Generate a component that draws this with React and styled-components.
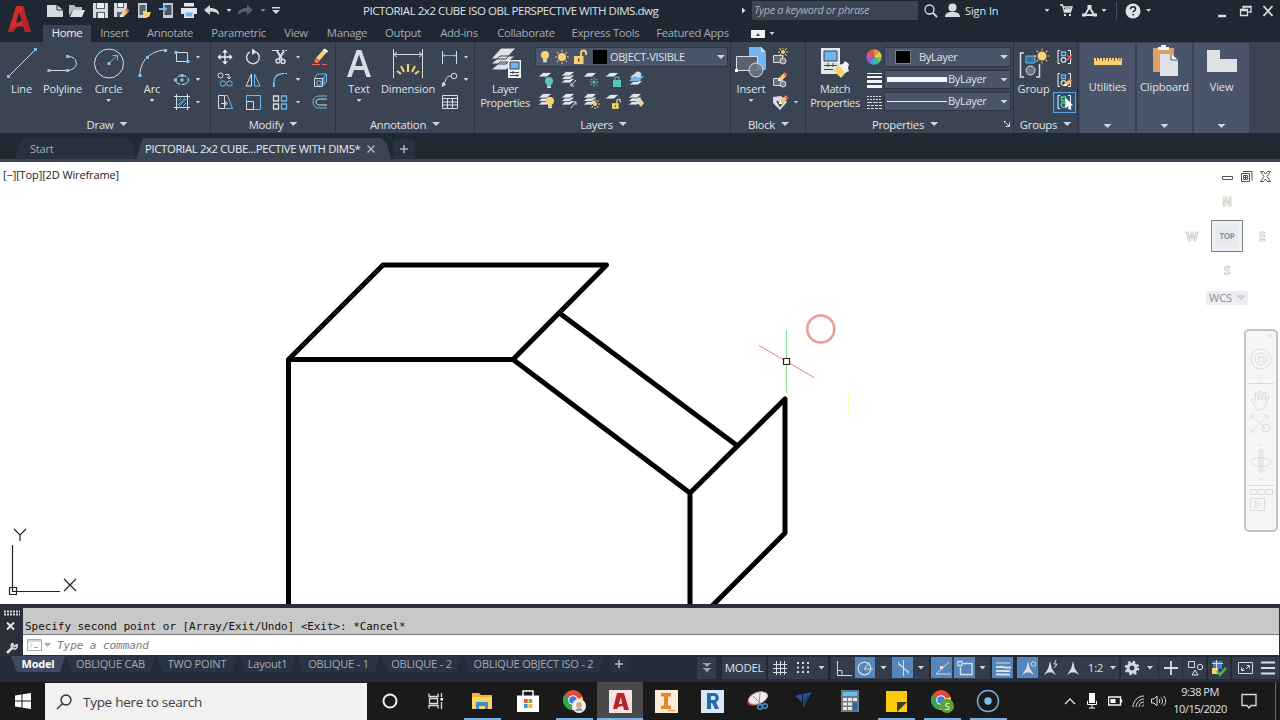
import styled, { createGlobalStyle, css } from 'styled-components';

const light = '#d9dde3';
const blue = '#6fb7ee';
const yellow = '#f8d272';

const GlobalStyle = createGlobalStyle`
  * {
    box-sizing: border-box;
  }

  body {
    margin: 0;
    overflow: hidden;
    background: #1f2832;
    font-family: 'Open Sans', 'Noto Sans', sans-serif;
    font-size: 11px;
    letter-spacing: -0.3px;
    color: #dfe3e8;
  }
`;

const Window = styled.div`
  display: flex;
  flex-direction: column;
  width: 1280px;
  height: 720px;
  overflow: hidden;
  white-space: nowrap;
`;

const Svg = styled.svg`
  display: block;
  flex: none;
`;

const Caret = styled.i`
  flex: none;
  width: ${({ $size = 4 }) => $size * 2}px;
  height: ${({ $size = 4 }) => Math.ceil($size)}px;
  background: ${({ $color = '#cfd5dc' }) => $color};
  clip-path: polygon(0 0, 100% 0, 50% 100%);
`;

/* title bar */

const Header = styled.header`
  display: flex;
  height: 42px;
  background: #1f2832;
`;

const LogoBox = styled.div`
  flex: none;
  width: 43px;
  padding: 5px 0 0 7px;
`;

const HeaderRows = styled.div`
  flex: 1;
`;

const TitleRow = styled.div`
  display: flex;
  align-items: center;
  height: 21px;
`;

const QuickIcons = styled.div`
  display: flex;
  flex: none;
  align-items: center;
  width: 320px;
  padding-left: 3px;
`;

const Cell = styled.div`
  display: flex;
  flex: none;
  align-items: center;
  justify-content: ${({ $end }) => ($end ? 'flex-end' : 'center')};
  width: ${({ $w }) => $w}px;
`;

const FileTitle = styled.div`
  flex: none;
  width: 376px;
  font-size: 11.5px;
  letter-spacing: -0.45px;
`;

const PlayMark = styled.i`
  width: 4px;
  height: 7px;
  background: #d8dce2;
  clip-path: polygon(0 0, 100% 50%, 0 100%);
`;

const SearchInput = styled.div`
  flex: none;
  width: 166px;
  height: 19px;
  margin-left: 4px;
  padding-left: 2px;
  background: #3b4453;
  color: #a9b0ba;
  font-style: italic;
  letter-spacing: -0.4px;
  line-height: 18px;
`;

const SignIn = styled.span`
  flex: none;
  width: 78px;
  margin-left: 3px;
  letter-spacing: -0.1px;
`;

const Divider = styled.i`
  width: 1px;
  height: 17px;
  background: #48515d;
`;

const RibbonTabs = styled.nav`
  display: flex;
  height: 21px;
  padding-top: 4px;
`;

const RibbonTab = styled.div`
  width: ${({ $w }) => $w}px;
  height: 17px;
  color: #a4abb5;
  font-size: 11.3px;
  line-height: 15px;
  text-align: center;

  ${({ $active }) => $active && css`
    background: #3b4453;
    color: #eef1f4;
  `}
`;

const MiniPanel = styled.div`
  display: flex;
  align-items: center;
  justify-content: center;
  width: 14px;
  height: 8px;
  margin: 5px 5px 0 14px;
  background: #f2f3f5;

  i {
    border: 2px solid transparent;
    border-bottom: 3px solid #3b4453;
    border-top: 0;
  }
`;

/* ribbon */

const Ribbon = styled.section`
  display: flex;
  height: 91px;
  padding-left: 2px;
  background: #3b4453;
`;

const Panel = styled.div`
  display: flex;
  flex: none;
  flex-direction: column;
  width: ${({ $w }) => $w}px;
  border-right: 1px solid #29313d;
`;

const PanelBody = styled.div`
  display: flex;
  height: 73px;
`;

const PanelTitle = styled.div`
  display: flex;
  align-items: center;
  justify-content: center;
  gap: 6px;
  height: 18px;
  padding-left: ${({ $shift = 0 }) => $shift}px;
  font-size: 11.3px;
  letter-spacing: -0.25px;
`;

const BigButton = styled.div`
  display: flex;
  flex: none;
  flex-direction: column;
  align-items: center;
  width: ${({ $w }) => $w}px;
  padding-top: 5px;
  line-height: 14px;
  text-align: center;
  letter-spacing: ${({ $spacing = -0.12 }) => $spacing}px;

  span {
    height: 15px;
    margin: 3px -10px 0;
  }

  ${Caret} {
    margin-top: 2px;
  }
`;

const ToolColumn = styled.div`
  display: grid;
  grid-template-rows: 22px 23px 22px;
  grid-template-columns: ${({ $cols = '20px 12px' }) => $cols};
  place-items: center;
  height: 67px;
  margin: 4px 0 0 ${({ $left = 0 }) => $left}px;
`;

const LayerTools = styled.div`
  width: 195px;
  padding-top: 5px;
`;

const Combo = styled.div`
  display: flex;
  align-items: center;
  width: ${({ $w }) => $w}px;
  height: ${({ $h = 20 }) => $h}px;
  padding: 0 2px;
  border: 1px solid #2f3744;
  background: #4a556a;
  line-height: 14px;

  span {
    padding-bottom: 1px;
  }

  ${Caret} {
    margin-left: auto;
  }
`;

const Swatch = styled.i`
  width: ${({ $framed }) => ($framed ? 16 : 14)}px;
  height: 14px;
  margin: ${({ $framed }) => ($framed ? '0 8px 0 8px' : '0 3px 0 0')};
  background: #000;
  border: ${({ $framed }) => ($framed ? '1px solid #77808d' : '0')};
`;

const IconRow = styled.div`
  display: grid;
  grid-template-columns: repeat(5, 22.4px);
  place-items: center;
  height: 22px;
  margin-top: 1px;

  & + & {
    margin-top: 0;
  }
`;

const PropertyRows = styled.div`
  display: flex;
  flex-direction: column;
  gap: 3px;
  padding-top: 5px;
`;

const LineSample = styled.i`
  width: 60px;
  height: ${({ $h }) => $h}px;
  margin-right: 1px;
  background: #f4f5f7;
`;

const Launcher = styled.div`
  margin-left: 60px;
  margin-right: -63px;
`;

const Selected = styled.div`
  display: flex;
  align-items: center;
  justify-content: center;
  width: 23px;
  height: 21px;
  border: 1px solid #58a3df;
  background: #2e506e;
`;

const Tile = styled.div`
  display: flex;
  flex-direction: column;
  align-items: center;
  width: 55px;
  height: 90px;
  margin: 1px 0 0 2px;
  background: #4a556b;
  letter-spacing: -0.1px;

  span {
    height: 32px;
  }

  ${Caret} {
    margin-top: 13px;
  }
`;

const TileIcon = styled.div`
  display: flex;
  align-items: center;
  height: 36px;
`;

/* drawing tabs */

const FileTabs = styled.div`
  display: flex;
  align-items: flex-end;
  height: 29px;
  padding: 5px 0 0 15px;
  border-bottom: 3px solid #3b4453;
  background: #1f2a33;
`;

const FileTab = styled.div`
  display: flex;
  align-items: center;
  width: ${({ $w }) => $w}px;
  height: 21px;
  padding-left: ${({ $pad }) => $pad}px;
  background: ${({ $active }) => ($active ? '#3b4453' : '#28323f')};
  color: ${({ $active }) => ($active ? '#e8ebef' : '#a0a8b2')};
  clip-path: polygon(7px 0, calc(100% - 10px) 0, calc(100% - 4px) 6px, 100% 100%, 0 100%);
  font-size: 11.3px;
  letter-spacing: -0.33px;

  svg {
    margin-left: 7px;
  }
`;

const PlusTab = styled.div`
  display: flex;
  align-items: center;
  justify-content: center;
  width: ${({ $w }) => $w}px;
  height: ${({ $h }) => $h}px;
  margin-left: ${({ $left }) => $left}px;
  border-radius: 4px;
  background: #28323f;
`;

/* canvas */

const Canvas = styled.main`
  position: relative;
  height: 442px;
  background: #fff;
`;

const Drawing = styled.svg`
  display: block;
`;

const ViewLabel = styled.div`
  position: absolute;
  top: 6px;
  left: 3px;
  color: #222;
  font-size: 11px;
  line-height: 14px;
  letter-spacing: -0.12px;
`;

const ViewControls = styled.div`
  position: absolute;
  top: 8px;
  right: 9px;
`;

const Compass = styled.div`
  position: absolute;
  top: 32px;
  left: 1184px;
  display: grid;
  grid-template-columns: 16px 54px 16px;
  grid-template-rows: 15px 54px 15px;
  place-items: center;
  color: #fff;
  font-size: 12px;
  font-weight: 700;
  -webkit-text-stroke: 0.6px #b4b4b4;
`;

const CubeFace = styled.div`
  width: 32px;
  height: 32px;
  border: 1px solid #858585;
  background: #e6eaee;
  box-shadow: inset 0 0 0 4px #edeff1;
  color: #8c9299;
  font-size: 8px;
  letter-spacing: -0.3px;
  line-height: 30px;
  text-align: center;
  -webkit-text-stroke: 0;
`;

const Wcs = styled.div`
  position: absolute;
  top: 129px;
  left: 1206px;
  display: flex;
  align-items: center;
  gap: 5px;
  width: 42px;
  height: 14px;
  padding: 0 0 1px 3px;
  background: #eeeef2;
  color: #8d8d92;
  letter-spacing: 0;
`;

const NavBar = styled.div`
  position: absolute;
  top: 167px;
  left: 1244px;
  width: 34px;
  height: 203px;
  border: 2px solid #c4c4c4;
  border-radius: 5px;
  background: #f6f6f6;
`;

/* command line */

const CommandBar = styled.section`
  display: flex;
  height: 52px;
  padding: 4px 1px 1px 0;
  background: #2b2f3c;
`;

const Gutter = styled.div`
  width: 23px;
`;

const CommandBox = styled.div`
  flex: 1;
  font-family: 'DejaVu Sans Mono', monospace;
  font-size: 11px;
  letter-spacing: -0.06px;
`;

const CommandLog = styled.div`
  height: 27px;
  padding: 12px 0 0 2px;
  border-bottom: 1px solid #777;
  background: #c8c8c8;
  color: #111;
  line-height: 14px;
`;

const CommandInput = styled.div`
  display: flex;
  align-items: center;
  height: 20px;
  padding-left: 4px;
  background: #fff;
  color: #7b7b7b;
  font-style: italic;
`;

const Prompt = styled.div`
  display: flex;
  align-items: center;
  gap: 2px;
  width: 30px;
`;

/* status bar */

const StatusBar = styled.footer`
  display: flex;
  height: 26px;
  padding-left: 11px;
  background: #222b37;
`;

const LayoutTab = styled.div`
  width: ${({ $w }) => $w}px;
  height: 16px;
  margin-right: 1px;
  background: ${({ $active }) => ($active ? '#3f4a60' : '#2a3341')};
  clip-path: polygon(0 0, 100% 0, calc(100% - 5px) 100%, 6px 100%);
  color: ${({ $active }) => ($active ? '#fff' : '#a4abb5')};
  font-size: 11px;
  font-weight: ${({ $active }) => ($active ? 700 : 400)};
  letter-spacing: -0.18px;
  line-height: 15px;
  text-align: center;
`;

const StatusTools = styled.div`
  display: flex;
  align-items: center;
  height: 23px;
  margin-left: auto;
`;

const StatusGroup = styled.div`
  display: flex;
  align-items: center;
  height: 22px;
  margin-right: ${({ $gap = 2 }) => $gap}px;
  background: #333c4b;
`;

const StatusButton = styled.div`
  display: flex;
  align-items: center;
  justify-content: center;
  width: ${({ $w }) => $w}px;
  height: 21px;
  background: ${({ $on }) => ($on ? '#5486bb' : 'transparent')};
  font-size: 11.5px;
`;

const StatusGap = styled.i`
  width: 2px;
`;

/* taskbar */

const Taskbar = styled.div`
  display: flex;
  height: 38px;
  background: #1a1a1b;
`;

const TaskSearch = styled.div`
  display: flex;
  align-items: center;
  gap: 11px;
  width: 322px;
  margin-top: 1px;
  padding-left: 11px;
  background: #f1f1f1;
  color: #3d3d3d;
  font-size: 13.5px;
  letter-spacing: -0.28px;
`;

const TaskItem = styled.div`
  display: flex;
  align-items: center;
  justify-content: center;
  width: ${({ $w = 46 }) => $w}px;
  height: 38px;
  background-color: ${({ $focused }) => ($focused ? '#4a4a4c' : 'transparent')};
  background-image: ${({ $open }) => ($open ? 'linear-gradient(#76b2e6, #76b2e6)' : 'none')};
  background-repeat: no-repeat;
  background-position: center bottom;
  background-size: ${({ $focused }) => ($focused ? '100%' : '37px')} 2px;
`;

const Tray = styled.div`
  display: flex;
  align-items: center;
  margin-left: auto;
  padding-right: 4px;
`;

const Clock = styled.div`
  width: 62px;
  padding-bottom: 2px;
  font-size: 11px;
  letter-spacing: -0.5px;
  line-height: 17px;
  text-align: center;
`;

const ShowDesktop = styled.i`
  width: 1px;
  height: 38px;
  margin-left: 9px;
  background: #6a6a6a;
`;

function Icon({ w = 18, h = 18, stroke = light, children, ...rest }) {
  return (
    <Svg width={w} height={h} viewBox={`0 0 ${w} ${h}`} fill="none" stroke={stroke} {...rest}>
      {children}
    </Svg>
  );
}

function Grip({ points }) {
  return points.map(([x, y]) => (
    <rect key={`${x}-${y}`} x={x - 1.5} y={y - 1.5} width="3" height="3" fill="#7cc0f5" stroke="none" />
  ));
}

function Bulb({ x = 0, y = 0, color = yellow }) {
  return (
    <g transform={`translate(${x} ${y})`} stroke="none">
      <circle cx="4" cy="4" r="4" fill={color} />
      <path d="M2 7h4v2H2z" fill={color} />
      <path d="M2.2 9.2h3.6v2H2.2z" fill="#e9ecef" />
    </g>
  );
}

function Sun({ x, y, r = 3, color = yellow }) {
  return (
    <g stroke={color}>
      <circle cx={x} cy={y} r={r} fill={color} stroke="none" />
      {[0, 45, 90, 135].map((a) => (
        <path key={a} d={`M${x - r - 3} ${y}h2M${x + r + 1} ${y}h2`} transform={`rotate(${a} ${x} ${y})`} />
      ))}
    </g>
  );
}

function Lock({ x, y, color = yellow, s = 1 }) {
  return (
    <g transform={`translate(${x} ${y}) scale(${s})`}>
      <path d="M7 6V3a2.5 2.5 0 0 1 5 0v2" stroke={color} strokeWidth="1.8" />
      <path d="M0 6h9.5v8H0z" fill={color} stroke="none" />
      <path d="M4.7 8.5v3" stroke="#4a3d20" strokeWidth="1.4" />
    </g>
  );
}

function Sheets({ count = 3, y = 0, x = 0 }) {
  return [...Array(count).keys()].reverse().map((i) => (
    <path
      key={i}
      d={`M${x} ${y + 5 + i * 3.5}l5-4.5h9l-5 4.5z`}
      fill="#e2e5e9"
      stroke="#3b4453"
      strokeWidth=".8"
    />
  ));
}

function Pencil({ x, y, s = 1 }) {
  return (
    <g transform={`translate(${x} ${y}) scale(${s})`} stroke="none">
      <path d="M0 9l1-3.500 5-5L9 3.500l-5 5z" fill="#f4c66c" />
      <path d="M6 .5L7.500-1 10.500 2 9 3.500z" fill="#ee6c56" />
      <path d="M0 9l1-3.500L4 8.500z" fill="#fff" />
    </g>
  );
}

function QuickAccess() {
  return (
    <QuickIcons>
      <Cell $w={18}>
        <Icon w={16} h={14} stroke="none">
          <path d="M0 1h10l6 5v7H0z" fill="#d5dae0" />
          <path d="M10 1v5h6" stroke="#1f2832" />
        </Icon>
      </Cell>
      <Cell $w={26}>
        <Icon w={16} h={14} stroke="none">
          <path d="M0 1h5l2 2h6v3H4L0 12z" fill="#b4bbc4" />
          <path d="M4 6h12l-3 7H1z" fill="#dfe3e8" />
        </Icon>
      </Cell>
      <Cell $w={20}>
        <Icon w={15} h={15} stroke="none">
          <path d="M0 0h15v15H0z" fill="#d5dae0" />
          <path d="M3 0h9v6H3zM3 9h9v6H3z" fill="#59626e" />
          <path d="M4 0h7v5H4zM5 10h6v5H5z" fill="#eef0f2" />
        </Icon>
      </Cell>
      <Cell $w={24}>
        <Icon w={16} h={15} stroke="none">
          <path d="M0 0h13v6l-7 8H0z" fill="#d5dae0" />
          <path d="M3 0h7v5H3zM3 9h5v5H3z" fill="#59626e" />
          <path d="M4 0h5v4H4z" fill="#eef0f2" />
          <Pencil x={6} y={6} s={0.9} />
        </Icon>
      </Cell>
      <Cell $w={20}>
        <Icon w={15} h={15} stroke="none">
          <path d="M1 0h9v15H1z" fill="#c6ccd4" />
          <path d="M2.500 2h6v10h-6z" fill="#5a6470" />
          <path d="M6 8h3l1 1h4l-2 5H6z" fill={yellow} />
        </Icon>
      </Cell>
      <Cell $w={24}>
        <Icon w={15} h={15} stroke="none">
          <path d="M4 0h10v15H4z" fill="#c6ccd4" />
          <path d="M5.500 2h7v10h-7z" fill="#4a5460" />
          <path d="M0 5h4V2.500L8.500 6 4 9.500V7H0z" fill={blue} />
        </Icon>
      </Cell>
      <Cell $w={21}>
        <Icon w={16} h={15} stroke="none">
          <path d="M3 0h10v3.500H3zM0 5h16v6H0z" fill="#e3e6ea" />
          <path d="M3 9h10v6H3z" fill="#e3e6ea" />
          <path d="M4.500 9.500h7v4h-7z" fill={blue} />
        </Icon>
      </Cell>
      <Cell $w={26}>
        <Icon w={16} h={11} stroke="none">
          <path d="M0 5l6-5v3c6 0 9 2 9 7-2-3-5-3.500-9-3.500V10z" fill="#d5dae0" />
        </Icon>
      </Cell>
      <Cell $w={8}><Caret $size={2.5} /></Cell>
      <Cell $w={26}>
        <Icon w={16} h={11} stroke="none">
          <path d="M15 5L9 0v3C3 3 0 5 0 10c2-3 5-3.500 9-3.500V10z" fill="#58616c" />
        </Icon>
      </Cell>
      <Cell $w={8}><Caret $size={2.5} $color="#7a828d" /></Cell>
      <Cell $w={18}>
        <Icon w={8} h={9} stroke="none">
          <path d="M0 1h8v1.400H0zM0 4h8L4 8z" fill="#d5dae0" />
        </Icon>
      </Cell>
    </QuickIcons>
  );
}

const ribbonTabs = [
  ['Home', 48], ['Insert', 47], ['Annotate', 64], ['Parametric', 73], ['View', 42], ['Manage', 60],
  ['Output', 52], ['Add-ins', 60], ['Collaborate', 74], ['Express Tools', 85], ['Featured Apps', 89],
];

function TitleBar() {
  return (
    <Header>
      <LogoBox>
        <Icon w={25} h={28} stroke="none">
          <path d="M9 1h7l8 26h-6l-2-6-7 1-3 5H1zM12 7l-3 11 6-2z" fill="#d42a2b" fillRule="evenodd" />
          <path d="M1 27l8-7 1 2-4 5zM14 14l4 13h6L16 1z" fill="#b8232a" />
        </Icon>
      </LogoBox>
      <HeaderRows>
        <TitleRow>
          <QuickAccess />
          <FileTitle>PICTORIAL 2x2 CUBE ISO OBL PERSPECTIVE WITH DIMS.dwg</FileTitle>
          <Cell $w={9}><PlayMark /></Cell>
          <SearchInput>Type a keyword or phrase</SearchInput>
          <Cell $w={25}>
            <Icon w={14} h={14} strokeWidth="1.300">
              <circle cx="5.500" cy="5.500" r="4.500" />
              <path d="M8.700 8.700L13 13" strokeWidth="1.800" />
            </Icon>
          </Cell>
          <Cell $w={19}>
            <Icon w={15} h={15} stroke="none">
              <circle cx="7.500" cy="4.500" r="4" fill="#d8dce2" />
              <path d="M0 14c0-4 3-5 7.500-5s7.500 1 7.500 5z" fill="#d8dce2" />
            </Icon>
          </Cell>
          <SignIn>Sign In</SignIn>
          <Cell $w={8}><Caret $size={2.5} /></Cell>
          <Cell $w={31}>
            <Icon w={13} h={13}>
              <path d="M0 1h2.500l2 7h6.500M3 3h9l-1 3.500H4M5 5h6" strokeWidth="1.400" />
              <path d="M4 10h2v2H4zM9 10h2v2H9z" fill={light} stroke="none" />
            </Icon>
          </Cell>
          <Cell $w={14}>
            <Icon w={15} h={14} strokeWidth="2">
              <path d="M7.500 3L3 11h9z" />
              <path d="M5.500 1h4v3h-4zM0 9.500h4v3H0zM11 9.500h4v3h-4z" fill={light} stroke="none" />
            </Icon>
          </Cell>
          <Cell $w={16}><Caret $size={2.5} /></Cell>
          <Cell $w={9}><Divider /></Cell>
          <Cell $w={23}>
            <Icon w={16} h={16} stroke="none">
              <circle cx="8" cy="8" r="7.500" fill="#dfe3e8" />
              <path d="M5.500 6.200c0-3.200 5-3.200 5 0 0 1.800-2.400 1.600-2.400 3.300" stroke="#1f2832" strokeWidth="1.500" />
              <path d="M7.300 11h1.600v1.600H7.300z" fill="#1f2832" />
            </Icon>
          </Cell>
          <Cell $w={9}><Caret $size={2.5} /></Cell>
          <Cell $w={122} $end>
            <Icon w={58} h={14} strokeWidth="1.300">
              <path d="M1 12h8" strokeWidth="2.500" />
              <path d="M23.500 5.500h7v6h-7zM26 5V2.500h8V8h-2.500M23.500 6.500h7M26 3h8" />
              <path d="M46.500 2l9 10M55.500 2l-9 10" strokeWidth="1.800" />
            </Icon>
          </Cell>
        </TitleRow>
        <RibbonTabs>
          {ribbonTabs.map(([name, width], i) => (
            <RibbonTab key={name} $w={width} $active={i === 0}>{name}</RibbonTab>
          ))}
          <MiniPanel><i /></MiniPanel>
          <Cell $w={4}><Caret $size={2.5} /></Cell>
        </RibbonTabs>
      </HeaderRows>
    </Header>
  );
}

function DrawPanel() {
  return (
    <Panel $w={209}>
      <PanelBody>
        <BigButton $w={39}>
          <Icon w={32} h={32}>
            <path d="M3 29L29 3" />
            <Grip points={[[2.5, 29.5], [29.5, 2.5]]} />
          </Icon>
          <span>Line</span>
        </BigButton>
        <BigButton $w={43}>
          <Icon w={34} h={32}>
            <path d="M3 23.500h19c11-1 11-14 0-14" />
            <Grip points={[[3, 23.5], [21.5, 23.5], [21.5, 9.5]]} />
          </Icon>
          <span>Polyline</span>
        </BigButton>
        <BigButton $w={49}>
          <Icon w={32} h={32}>
            <circle cx="16" cy="16.500" r="14.500" />
            <path d="M16 16.500l8-8M19.500 8.500h5v5" stroke={blue} />
            <Grip points={[[16, 16.5]]} />
          </Icon>
          <span>Circle</span>
          <Caret $size={2.5} />
        </BigButton>
        <BigButton $w={38}>
          <Icon w={32} h={32}>
            <path d="M4 28C4 14 14 4 29 3" />
            <Grip points={[[4, 28.5], [11.5, 10.5], [29.5, 3.5]]} />
          </Icon>
          <span>Arc</span>
          <Caret $size={2.5} />
        </BigButton>
        <ToolColumn $left={1}>
          <Icon>
            <path d="M3.500 4.500h11v9h-11z" />
            <Grip points={[[3, 4.5], [15, 13.5]]} />
          </Icon>
          <Caret $size={2.5} />
          <Icon>
            <ellipse cx="9" cy="9" rx="6.500" ry="4.500" strokeDasharray="9 1.500" />
            <Grip points={[[9, 4.5], [9, 9], [2.5, 9]]} />
          </Icon>
          <Caret $size={2.5} />
          <Icon>
            <path d="M3.500 1v16M14.500 1v16M1 3.500h16M1 14.500h16" />
            <path d="M5 8l3-3M5 12l7-7M6 13l7-7M10 13l3-3" stroke={blue} />
          </Icon>
          <Caret $size={2.5} />
        </ToolColumn>
      </PanelBody>
      <PanelTitle $shift={2}>Draw<Caret /></PanelTitle>
    </Panel>
  );
}

function ModifyPanel() {
  return (
    <Panel $w={125}>
      <PanelBody>
        <ToolColumn $cols="28px 28px 26px 10px 33px">
          <Icon>
            <path d="M9 3v12M3 9h12" strokeWidth="1.300" stroke="#f4f5f7" />
            <path d="M9 1.500l3 3H6zM9 16.500l3-3H6zM1.500 9l3-3v6zM16.500 9l-3-3v6z" fill="#f4f5f7" stroke="none" />
          </Icon>
          <Icon>
            <path d="M12.500 4.200a6.300 6.300 0 1 1-6.500-.4" strokeWidth="1.400" />
            <path d="M8 .5L13 4 8 7z" fill={light} stroke="none" />
          </Icon>
          <Icon>
            <path d="M1 2.500h7" />
            <path d="M11 2.500h6" strokeDasharray="2 1" />
            <path d="M6 3l5 8M13 3l-5 8" strokeWidth="2" />
            <circle cx="7" cy="13" r="2" strokeWidth="1.500" />
            <circle cx="12" cy="13.500" r="2" strokeWidth="1.500" />
          </Icon>
          <Caret $size={2.5} />
          <Icon stroke="none">
            <path d="M5 10l8-9 3.500 2.500-8 9z" fill={yellow} />
            <path d="M12 2l1.500-1.500L17 3l-1 1.500z" fill="#fff" />
            <path d="M3 12.500L5.500 10 9 12.500l-2 2.500H4z" fill="#ec6a5a" />
            <path d="M1 16.500h8M11 16.500h5" stroke="#ec6a5a" />
          </Icon>
          <Icon>
            <circle cx="4.500" cy="4.500" r="2.500" />
            <path d="M9 3.500h4v4M11 6l2 2 2-2" />
            <circle cx="7" cy="12.500" r="2.700" stroke={blue} />
            <circle cx="13.500" cy="12.500" r="2.700" stroke={blue} />
          </Icon>
          <Icon>
            <path d="M7.500 3v12H2z" />
            <path d="M10.500 3v12H16z" stroke={blue} />
          </Icon>
          <Icon>
            <path d="M3 16v-5c0-5 3-8 8-8" stroke={blue} strokeWidth="1.500" />
            <path d="M11 2.500h5M2.500 16v-4" strokeDasharray="2 1" />
          </Icon>
          <Caret $size={2.5} />
          <Icon stroke={blue}>
            <path d="M3.500 7.500h8v8h-8z" stroke={light} />
            <path d="M3.500 7l3-4h9l-4 4.500M15.500 3v8l-4 4.500M6 10h4v4H6zM13 6v7" />
          </Icon>
          <Icon>
            <path d="M2.500 2.500h6v13h-6zM5 10.500h5M8.500 8l3 2.500-3 2.500" />
            <path d="M9 2.500h2.500l5 13H9" stroke={blue} />
          </Icon>
          <Icon>
            <path d="M2.500 2.500h14v14h-14z" stroke={blue} />
            <path d="M2.500 8.500h7v8h-7z" />
          </Icon>
          <Icon>
            <path d="M2.500 3h5v5h-5zM2.500 11h5v5h-5z" strokeWidth="1.300" />
            <path d="M10.500 3h5v5h-5zM10.500 11h5v5h-5z" strokeWidth="1.300" stroke={blue} />
          </Icon>
          <Caret $size={2.5} />
          <Icon>
            <path d="M16 3H8C0 3 0 15 8 15h8" stroke={blue} />
            <path d="M16 6H8c-4 0-4 6 0 6h8" />
          </Icon>
        </ToolColumn>
      </PanelBody>
      <PanelTitle>Modify<Caret /></PanelTitle>
    </Panel>
  );
}

function AnnotationPanel() {
  return (
    <Panel $w={139}>
      <PanelBody>
        <BigButton $w={46}>
          <Icon w={24} h={32} stroke="none">
            <path
              d="M9.600 3h4.800L24 30h-4.600l-2.300-7H6.900l-2.300 7H0zM12 7.600L8.200 19h7.600z"
              fill="#d9dde3"
              fillRule="evenodd"
            />
          </Icon>
          <span>Text</span>
          <Caret $size={2.5} />
        </BigButton>
        <BigButton $w={52}>
          <Icon w={32} h={32}>
            <path d="M1.500 2v29M30.500 2v29M2 7.500h28M5 5L2 7.500 5 10M27 5l3 2.500-3 2.500" />
            <path
              d="M16 25v-8M12 25l-3-6M20 25l3-6M9 27l-4-3M23 27l4-3"
              stroke={yellow}
              strokeWidth="2"
            />
          </Icon>
          <span>Dimension</span>
        </BigButton>
        <ToolColumn $left={6}>
          <Icon>
            <path d="M1.500 3v13M15.500 3v13" />
            <path d="M2 7.500h13M4 6L2.500 7.500 4 9M13 6l1.500 1.500L13 9" stroke={blue} />
          </Icon>
          <Caret $size={2.5} />
          <Icon>
            <circle cx="13" cy="5" r="2.800" />
            <path d="M10 5C4 5 6 9 2 14" />
            <path d="M1 15.500l1-4 2.500 2z" fill={light} />
          </Icon>
          <Caret $size={2.5} />
          <Icon>
            <path d="M1.500 2.500h15v13h-15zM1.500 5.500h15M1.500 9h15M1.500 12h15M6.500 5.500v10M11.500 5.500v10" />
          </Icon>
        </ToolColumn>
      </PanelBody>
      <PanelTitle>Annotation<Caret /></PanelTitle>
    </Panel>
  );
}

function LayersPanel() {
  const teal = '#54c8bd';
  return (
    <Panel $w={256}>
      <PanelBody>
        <BigButton $w={60} $spacing={-0.37}>
          <Icon w={32} h={32} stroke="none">
            <path d="M2 23l9-8h15l-9 8zM2 17l9-8h15l-9 8zM2 12L12 1h15l-10 11z" fill="#dfe2e6" stroke="#3b4453" />
            <path d="M19 13h13v18H19z" fill="#f2f3f5" />
            <path d="M21 15h9v7h-9z" fill={blue} stroke="#3b4453" />
            <path d="M21 25.500h9M21 28.500h9M24 24v3M28 27v3" stroke="#3b4453" />
          </Icon>
          <span>
            Layer
            <br />
            Properties
          </span>
        </BigButton>
        <LayerTools>
          <Combo $w={193}>
            <Icon w={55} h={16}>
              <Bulb x={3} y={2} />
              <Sun x={24} y={8} r={4} />
              <Lock x={36} y={1} />
            </Icon>
            <Swatch />
            <span>OBJECT-VISIBLE</span>
            <Caret />
          </Combo>
          <IconRow>
            <Icon><Sheets count={1} y={2} x={1} /><Bulb x={8} y={7} color={teal} /></Icon>
            <Icon><Sheets x={1} y={1} /><path d="M16 10l-5 6M11 13v3h3" /></Icon>
            <Icon><Sheets count={1} y={2} x={1} /><Sun x={12} y={12} r={1.5} color={teal} /></Icon>
            <Icon>
              <Sheets count={1} y={2} x={1} />
              <path d="M9 10h8v7H9z" fill={teal} stroke="none" />
              <path d="M11 10V7h4v3" stroke={teal} />
            </Icon>
            <Icon>
              <Sheets x={2} y={3} />
              <path d="M2 11l5-5h10l-5 5z" fill={blue} stroke="none" />
              <circle cx="11" cy="4.500" r="3" fill={light} stroke="none" />
            </Icon>
          </IconRow>
          <IconRow>
            <Icon><Sheets x={1} y={1} /><Bulb x={9} y={5} /></Icon>
            <Icon><Sheets x={1} y={1} /><path d="M11 16l5-6M13 10h3v3" /></Icon>
            <Icon><Sheets x={1} y={1} /><Sun x={13} y={12} r={2} /></Icon>
            <Icon><Sheets count={1} y={2} x={1} /><Lock x={8} y={7} s={0.7} /></Icon>
            <Icon>
              <Sheets x={1} y={1} />
              <path d="M9 9l4-3 4 5-3 4z" fill={light} stroke="none" />
              <path d="M12 8l3 5" stroke={yellow} strokeWidth="2" />
            </Icon>
          </IconRow>
        </LayerTools>
      </PanelBody>
      <PanelTitle $shift={2}>Layers<Caret /></PanelTitle>
    </Panel>
  );
}

function BlockPanel() {
  const block = <path d="M2.500 7.500h9v7h-9z" fill="#626b78" />;
  return (
    <Panel $w={75}>
      <PanelBody>
        <BigButton $w={40}>
          <Icon w={32} h={32}>
            <path d="M14 0h12l5 6v17H14z" fill={blue} stroke="none" />
            <path d="M26 0v5h5z" fill="#c6e2f7" stroke="none" />
            <path d="M1.500 9.500h21v14h-21z" fill="#59636f" />
            <circle cx="21" cy="23" r="7" fill="#6c7683" fillOpacity=".85" />
            <path d="M0 22h3v3H0z" fill="#fff" stroke="none" />
          </Icon>
          <span>Insert</span>
          <Caret $size={2.5} />
        </BigButton>
        <ToolColumn $left={-1}>
          <Icon>
            {block}
            <circle cx="12" cy="13" r="3" fill="#7b8490" />
            <Sun x={12} y={4} r={2} />
          </Icon>
          <i />
          <Icon>
            {block}
            <circle cx="12" cy="13" r="3" fill="#7b8490" />
            <Pencil x={7} y={2} s={0.9} />
          </Icon>
          <i />
          <Icon>
            <path d="M2 4l8-1 6 6-7 8-7-7z" fill={light} stroke="none" />
            <path d="M6 8l3 5 5-6" stroke="#3b4453" strokeWidth="1.500" />
            <Pencil x={8} y={3} s={0.9} />
          </Icon>
          <Caret $size={2.5} />
        </ToolColumn>
      </PanelBody>
      <PanelTitle $shift={1}>Block<Caret /></PanelTitle>
    </Panel>
  );
}

function ColorWheel() {
  const colors = ['#f08a3c', '#f2c94c', '#7ac74f', '#3cb6a4', '#4b93e0', '#8e62cf', '#d3549b', '#e8514a'];
  return (
    <Icon stroke="none">
      {colors.map((color, i) => (
        <path key={color} d="M9 9V1.300a7.700 7.700 0 0 1 5.450 2.250z" fill={color} transform={`rotate(${i * 45} 9 9)`} />
      ))}
    </Icon>
  );
}

function PropertiesPanel() {
  return (
    <Panel $w={208}>
      <PanelBody>
        <BigButton $w={58} $spacing={-0.37}>
          <Icon w={32} h={32} stroke="none">
            <path d="M2 1h19v26H2z" fill="#e4e7ea" />
            <path d="M5 4h13v10H5z" fill={blue} stroke="#3b4453" />
            <path d="M5 18.500h13M5 22.500h9M9 16v4M14 16v4" stroke="#3b4453" />
            <path d="M14 23l7-6 7 7-6 7z" fill={yellow} />
            <path d="M20 18l4-1 2-3 4 3-1 4 1 3-4 2z" fill="#f2f3f5" />
          </Icon>
          <span>
            Match
            <br />
            Properties
          </span>
        </BigButton>
        <ToolColumn $cols="20px">
          <ColorWheel />
          <Icon stroke="#f2f3f5">
            <path d="M2 2.500h15" />
            <path d="M2 6h15" strokeWidth="2" />
            <path d="M2 10.500h15" strokeWidth="3" />
            <path d="M2 15.500h15" strokeWidth="3" />
          </Icon>
          <Icon>
            <path d="M2 3.500h15M2 6.500h15" strokeDasharray="2 1" />
            <path d="M2 9.500h15" strokeDasharray="5 1" />
            <path d="M2 12.500h15M2 15.500h15" strokeDasharray="3 1" />
          </Icon>
        </ToolColumn>
        <PropertyRows>
          <Combo $w={127}>
            <Swatch $framed />
            <span>ByLayer</span>
            <Caret />
          </Combo>
          <Combo $w={127} $h={19}>
            <LineSample $h={5} />
            <span>ByLayer</span>
            <Caret />
          </Combo>
          <Combo $w={127} $h={19}>
            <LineSample $h={1} />
            <span>ByLayer</span>
            <Caret />
          </Combo>
        </PropertyRows>
      </PanelBody>
      <PanelTitle>
        Properties
        <Caret />
        <Launcher>
          <Icon w={6} h={6}><path d="M0 .5h2M.5 0v2M2 2l3 3M5.500 1.500v4h-4" /></Icon>
        </Launcher>
      </PanelTitle>
    </Panel>
  );
}

function GroupMark({ color = blue }) {
  return (
    <>
      <path d="M4 2.500H2v13h2M12 2.500h2.500v13H12" stroke="#f2f3f5" />
      <path d="M5.500 4h4v3.500h-4z" stroke={color} strokeWidth="1.300" />
      <circle cx="7.500" cy="12" r="2.300" stroke={color === blue ? light : color} strokeWidth="1.300" />
    </>
  );
}

function GroupsPanel() {
  return (
    <Panel $w={64}>
      <PanelBody>
        <BigButton $w={39}>
          <Icon w={32} h={32}>
            <path d="M6 6H2.500v24H6M18 30h3.500V17" strokeWidth="1.500" />
            <path d="M8 9h9v7H8z" fill="#3a6f9b" stroke={blue} />
            <circle cx="12.500" cy="23.500" r="4.500" fill="#6b747f" />
            <Sun x={24} y={9} r={4.5} />
          </Icon>
          <span>Group</span>
        </BigButton>
        <ToolColumn $cols="23px">
          <Icon>
            <GroupMark />
            <path d="M11 7l5 5M16 7l-5 5" stroke="#e8564f" strokeWidth="1.600" />
          </Icon>
          <Icon>
            <GroupMark />
            <Pencil x={8} y={8} s={0.8} />
          </Icon>
          <Selected>
            <Icon>
              <GroupMark color="#5fd08a" />
              <path d="M9.500 4.500v11l2.600-2.300 1.800 3.800 1.600-.8-1.700-3.600h3.400z" fill="#fff" stroke="none" />
            </Icon>
          </Selected>
        </ToolColumn>
      </PanelBody>
      <PanelTitle>Groups<Caret /></PanelTitle>
    </Panel>
  );
}

function CollapsedPanels() {
  return (
    <>
      <Tile>
        <TileIcon>
          <Icon w={28} h={8} stroke="none">
            <path d="M0 1h28v7H0z" fill={yellow} />
            <path
              d="M2.500 1v3M5.500 1v2M8.500 1v3M11.500 1v2M14.500 1v3M17.500 1v2M20.500 1v3M23.500 1v2M26 1v3"
              stroke="#6c5a2a"
            />
          </Icon>
        </TileIcon>
        <span>Utilities</span>
        <Caret />
      </Tile>
      <Tile>
        <TileIcon>
          <Icon w={26} h={32} stroke="none">
            <path d="M1 3h21v24H1z" fill="#dca265" />
            <path d="M6 5V2h3V0h5v2h3v3z" fill="#f2f3f5" />
            <path d="M8 9h11l7 6v16H8z" fill="#dfe1e4" />
            <path d="M19 9v6h7" stroke="#4a556b" fill="#fff" />
          </Icon>
        </TileIcon>
        <span>Clipboard</span>
        <Caret />
      </Tile>
      <Tile>
        <TileIcon>
          <Icon w={30} h={22} stroke="none">
            <path d="M0 0h13v9h17v13H0z" fill="#dfe1e4" />
          </Icon>
        </TileIcon>
        <span>View</span>
        <Caret />
      </Tile>
    </>
  );
}

function CanvasArea() {
  return (
    <Canvas>
      <Drawing width="1280" height="442" viewBox="0 162 1280 442" fill="none">
        <path
          d="M288.500 606V359.500L383 265H606.500L513 359.500H288.500M513 359.500L690 493L785 399V533L710 608M690 493V608M560 313.500L737 445.500"
          stroke="#000"
          strokeWidth="5"
          strokeLinecap="round"
          strokeLinejoin="round"
        />
        <path d="M12.500 545v42M17 591.500h43M9.500 587.500h7v7h-7zM12.500 587v4.500h4.500" stroke="#222" strokeWidth="1.200" />
        <path d="M14 529l6 6 6-6M20 535v6M64 579l12 12M76 579l-12 12" stroke="#222" strokeWidth="1.200" />
        <path d="M786.500 330v28M786.500 365v28" stroke="#8fdc8f" />
        <path d="M759 345.500l24 14M790 363.500l24 14" stroke="#dd8290" />
        <path d="M783.500 358.500h6v6h-6z" stroke="#222" strokeWidth="1.200" />
        <circle cx="820.800" cy="329" r="13.500" stroke="#ef9a9a" strokeWidth="2.500" />
        <path d="M848.500 392v21" stroke="#fafac0" />
      </Drawing>
      <ViewLabel>[−][Top][2D Wireframe]</ViewLabel>
      <ViewControls>
        <Icon w={50} h={13} stroke="#555">
          <path d="M1.500 6.500h10v3h-10z" />
          <path d="M22 1.500h9v9M20.500 3.500h8v8h-8zM22.500 5.500h4v4h-4zM24.500 5v5M22 7.500h5" />
          <path d="M39.500 1.500h3l2 2.500 2-2.500h3l-3.500 5 3.500 5h-3l-2-2.500-2 2.500h-3l3.500-5z" />
        </Icon>
      </ViewControls>
      <Compass>
        <i />
        N
        <i />
        W
        <CubeFace>TOP</CubeFace>
        E
        <i />
        S
        <i />
      </Compass>
      <Wcs>
        WCS
        <Icon w={8} h={5} stroke="#b5b5bb"><path d="M.5 1h7L4 4z" /></Icon>
      </Wcs>
      <NavBar>
        <Icon w={30} h={199} stroke="#dcdcdc">
          <path d="M22 3l4 4M26 3l-4 4M2 52.500h26M2 154.500h26" />
          <circle cx="15" cy="28" r="10" />
          <circle cx="15" cy="28" r="6" />
          <path d="M13 26h5v5h-5zM13 47h4M13 114h4M13 148h4" />
          <path d="M10 76l-5-7 2-1 3 3-1-9 2 0 2 7 0-9 2 0 1 9 2-8 2 0-1 9 3-5 1 1-4 10-4 3h-5z" />
          <path d="M5 84l17 17M22 84L5 101M5 88v-4h4M18 84h4v4M5 97v4h4" />
          <circle cx="20" cy="97" r="4" />
          <path d="M15 119v22M13 119h4v22h-4zM5 131c0-6 20-6 20 0s-20 6-20 0" />
          <path d="M4.500 158.500h6v5h-6zM12.500 158.500h6v5h-6zM20.500 158.500h6v5h-6zM4.500 167.500h14v12h-14zM9 170l5 3.500-5 3.500z" />
        </Icon>
      </NavBar>
    </Canvas>
  );
}

function CommandLine() {
  return (
    <CommandBar>
      <Gutter>
        <Icon w={23} h={47}>
          <path d="M4 3.500h16M4 6.500h16" stroke="#d5d9de" strokeWidth="2" strokeDasharray="2 1" />
          <path d="M7 14.500l7 7M14 14.500l-7 7" stroke="#e8eaed" strokeWidth="1.800" />
          <path d="M7 45l6-6" strokeWidth="2.500" />
          <path d="M16.500 36a3 3 0 1 1-4-.5M13 35v2.500l1.500 1 2-2" strokeWidth="1.600" />
        </Icon>
      </Gutter>
      <CommandBox>
        <CommandLog>Specify second point or [Array/Exit/Undo] &lt;Exit&gt;: *Cancel*</CommandLog>
        <CommandInput>
          <Prompt>
            <Icon w={15} h={12} stroke="#aaa">
              <path d="M.5 .5h14v11H.5zM0 2h15M3 4.500l2 2-2 2M7 8.500h4" />
            </Icon>
            <Caret $size={3.5} $color="#aaa" />
          </Prompt>
          Type a command
        </CommandInput>
      </CommandBox>
    </CommandBar>
  );
}

function Annot({ extra }) {
  return (
    <Icon>
      <path d="M9 2l1.800 7.500L15 16l-4-2.500h-4L3 16l4.200-6.500z" fill={light} stroke="none" />
      {extra}
    </Icon>
  );
}

function Status() {
  return (
    <StatusBar>
      <LayoutTab $w={54} $active>Model</LayoutTab>
      <LayoutTab $w={89}>OBLIQUE CAB</LayoutTab>
      <LayoutTab $w={82}>TWO POINT</LayoutTab>
      <LayoutTab $w={57}>Layout1</LayoutTab>
      <LayoutTab $w={83}>OBLIQUE - 1</LayoutTab>
      <LayoutTab $w={81}>OBLIQUE - 2</LayoutTab>
      <LayoutTab $w={141}>OBLIQUE OBJECT ISO - 2</LayoutTab>
      <PlusTab $w={20} $h={16} $left={4}>
        <Icon w={8} h={8}><path d="M4 0v8M0 4h8" strokeWidth="1.600" stroke="#b7bdc6" /></Icon>
      </PlusTab>
      <StatusTools>
        <StatusGroup $gap={6}>
          <StatusButton $w={19}>
            <Icon w={8} h={10} stroke="none">
              <path d="M0 0h8v1H0zM1 1h6L4 4zM0 5h8v1H0zM1 6h6L4 9.500z" fill="#9aa2ad" />
            </Icon>
          </StatusButton>
        </StatusGroup>
        <StatusGroup><StatusButton $w={44}>MODEL</StatusButton></StatusGroup>
        <StatusGroup $gap={3}>
          <StatusButton $w={23}>
            <Icon><path d="M5.500 2v14M9.500 2v14M13.500 2v14M2 5.500h14M2 9.500h14M2 13.500h14" /></Icon>
          </StatusButton>
          <StatusButton $w={24}>
            <Icon>
              <path d="M3 4h13M3 8.500h13M3 13h13" strokeWidth="1.800" strokeDasharray="2 3" />
            </Icon>
          </StatusButton>
          <StatusButton $w={13}><Caret $size={3.5} /></StatusButton>
        </StatusGroup>
        <StatusGroup>
          <StatusButton $w={24}><Icon><path d="M3.500 2v14.500H18M4 11.500h4v4" /></Icon></StatusButton>
          <StatusButton $w={20} $on>
            <Icon>
              <circle cx="8.500" cy="9.500" r="6.300" strokeWidth="1.200" />
              <path d="M8 10h9M8 10l6-7" />
            </Icon>
          </StatusButton>
          <StatusButton $w={17}><Caret $size={3.5} /></StatusButton>
          <StatusButton $w={21} $on>
            <Icon><path d="M9.500 1v16M4 3l11 12M4 5l11 8" /></Icon>
          </StatusButton>
          <StatusButton $w={16}><Caret $size={3.5} /></StatusButton>
        </StatusGroup>
        <StatusGroup>
          <StatusButton $w={21} $on>
            <Icon><path d="M16 3L3 15h15" /><path d="M7 7h3v3H7z" fill={light} stroke="none" /></Icon>
          </StatusButton>
          <StatusGap />
          <StatusButton $w={21} $on>
            <Icon><path d="M7 4.500h9v11H4.500V8M2 2.500h4v4H2z" strokeWidth="1.300" /></Icon>
          </StatusButton>
          <StatusButton $w={15}><Caret $size={3.5} /></StatusButton>
        </StatusGroup>
        <StatusGroup $gap={4}>
          <StatusButton $w={21} $on>
            <Icon>
              <path d="M2 4h14" />
              <path d="M2 8h8M10 8.500h7" strokeWidth="2" />
              <path d="M2 12h14" strokeWidth="2" />
              <path d="M2 15.500h14" strokeWidth="2" />
            </Icon>
          </StatusButton>
        </StatusGroup>
        <StatusGroup>
          <StatusButton $w={21} $on><Annot extra={<circle cx="14.500" cy="5" r="2.300" />} /></StatusButton>
          <StatusButton $w={24}><Annot extra={<path d="M15 1l-2 4h3l-3 4" />} /></StatusButton>
          <StatusButton $w={22}><Annot /></StatusButton>
          <StatusButton $w={23}>1:2</StatusButton>
          <StatusButton $w={12}><Caret $size={3.5} /></StatusButton>
        </StatusGroup>
        <StatusGroup $gap={1}>
          <StatusButton $w={21}>
            <Icon>
              <circle cx="9" cy="9" r="4" strokeWidth="3" />
              <circle cx="9" cy="9" r="6.300" strokeWidth="2" strokeDasharray="2.500 2.448" />
            </Icon>
          </StatusButton>
          <StatusButton $w={16}><Caret $size={3.5} /></StatusButton>
        </StatusGroup>
        <StatusGroup $gap={1}>
          <StatusButton $w={23}><Icon><path d="M9 2v14M2 9h14" strokeWidth="1.800" /></Icon></StatusButton>
        </StatusGroup>
        <StatusGroup>
          <StatusButton $w={23}>
            <Icon><path d="M2.500 2.500h6v6h-6zM9 11l3 5H6z" /><circle cx="14" cy="8" r="2.700" /></Icon>
          </StatusButton>
        </StatusGroup>
        <StatusGroup>
          <StatusButton $w={22}>
            <Icon stroke="none">
              <path d="M3 2h9v8H3z" fill="#3f7fc4" />
              <path d="M2 4.500h11M6.500 1v8" stroke={light} />
              <path d="M2 9h6v6H2z" fill={yellow} />
              <path d="M7 12l3 3.500L16 9" stroke="#4db34a" strokeWidth="2.500" />
            </Icon>
          </StatusButton>
        </StatusGroup>
        <StatusGroup $gap={1}>
          <StatusButton $w={25}>
            <Icon>
              <path d="M2.500 3.500h14v11h-14zM10.500 6.500h3v3M13 7l-3 3M8.500 11.500h-3v-3M6 11l2-2" />
            </Icon>
          </StatusButton>
          <StatusButton $w={22}><Icon><path d="M2 3.500h14M2 9h14M2 14.500h14" strokeWidth="1.800" /></Icon></StatusButton>
        </StatusGroup>
      </StatusTools>
    </StatusBar>
  );
}

function Chrome({ badge }) {
  return (
    <Icon w={24} h={24} stroke="none">
      <circle cx="11" cy="11" r="10" fill="#e4483b" />
      <path d="M11 11L2.300 6A10 10 0 0 0 10 21z" fill="#36a557" />
      <path d="M11 11l9.600-3A10 10 0 0 1 10 21z" fill="#f8cf3f" />
      <circle cx="11" cy="11" r="4.800" fill="#fff" />
      <circle cx="11" cy="11" r="3.800" fill="#3d7de0" />
      {badge}
    </Icon>
  );
}

function TaskbarIcons() {
  return (
    <>
      <TaskItem $w={45}><Icon><circle cx="9" cy="9" r="6.500" strokeWidth="2" stroke="#f2f2f2" /></Icon></TaskItem>
      <TaskItem $w={47}>
        <Icon>
          <path d="M2 1.500v3h9v-3M2 16.500v-3h9v3M2.500 6.500h8v5h-8zM14.500 1v4M14.500 10v7" strokeWidth="1.300" />
          <path d="M13.500 6h2.500v2.500h-2.500z" fill="#fff" stroke="none" />
        </Icon>
      </TaskItem>
      <TaskItem $open>
        <Icon w={20} h={18} stroke="none">
          <path d="M0 1h7l2 2h11v14H0z" fill="#eab53b" />
          <path d="M0 5h20v12H0z" fill="#f9d568" />
          <path d="M4 10h12v7h-3v-3H7v3H4z" fill="#3c8fd6" />
        </Icon>
      </TaskItem>
      <TaskItem>
        <Icon w={22} h={24} stroke="none">
          <path d="M6 7V2h10v5" stroke="#fff" strokeWidth="1.500" />
          <path d="M0 6.500h22V23H0z" fill="#fff" />
          <path d="M7 10h3.700v4H7z" fill="#e8502f" />
          <path d="M11.500 10h3.700v4h-3.700z" fill="#7bb532" />
          <path d="M7 15h3.700v4H7z" fill="#2f9fe0" />
          <path d="M11.500 15h3.700v4h-3.700z" fill="#f5b81f" />
        </Icon>
      </TaskItem>
      <TaskItem $open>
        <Chrome
          badge={(
            <>
              <circle cx="17" cy="17" r="7" fill="#f1efed" />
              <circle cx="17" cy="16" r="3" fill="#d8a987" />
              <path d="M13 22c1-4 7-4 8 0" fill="#9a9a9a" />
            </>
          )}
        />
      </TaskItem>
      <TaskItem $focused $open>
        <Icon w={23} h={23} stroke="none">
          <path d="M0 0h23v23H0z" fill="#f6e3df" />
          <path d="M8 3h7l5 17h-5l-1-4-5 1-1 2H4zM12 7l-2 7h3z" fill="#b9232c" fillRule="evenodd" />
        </Icon>
      </TaskItem>
      <TaskItem>
        <Icon w={23} h={23} stroke="none">
          <path d="M0 0h23v23H0z" fill="#fdebd7" />
          <path d="M6 3h10v3.500h-3v9h3V19H6v-3.500h3v-9H6z" fill="#de8a2e" />
          <path d="M13 20.500h7" stroke="#e9a45a" strokeWidth="1.500" />
        </Icon>
      </TaskItem>
      <TaskItem>
        <Icon w={23} h={23} stroke="none">
          <path d="M0 0h23v23H0z" fill="#d9e8f8" />
          <path d="M6 3h7c6 0 6 8 2 9l3 7h-4l-3-6h-1v6H6zM10 6v4h3c2 0 2-4 0-4z" fill="#2a69a8" fillRule="evenodd" />
        </Icon>
      </TaskItem>
      <TaskItem>
        <Icon w={24} h={24} stroke="none">
          <ellipse cx="11" cy="11" rx="10" ry="5" fill="#a93a3a" transform="rotate(-20 11 11)" />
          <ellipse cx="12" cy="9" rx="10" ry="5.500" fill="#eee" stroke="#c9a4a4" transform="rotate(-20 12 9)" />
          <path d="M7 7l9 9M14 4l-1 12" stroke="#8b9197" />
          <circle cx="14" cy="18" r="2.300" stroke="#3b93cf" strokeWidth="1.500" />
          <circle cx="19" cy="17" r="2.300" stroke="#3b93cf" strokeWidth="1.500" />
        </Icon>
      </TaskItem>
      <TaskItem>
        <Icon w={20} h={20} stroke="none">
          <path d="M1 5l7-2v8zM9 3l9-2-9 15z" fill="#25509b" />
          <path d="M9 10l6-7-5 14z" fill="#173a7a" />
        </Icon>
      </TaskItem>
      <TaskItem>
        <Icon w={18} h={22} stroke="none">
          <path d="M0 0h18v22H0z" fill="#707a84" />
          <path d="M2 2h14v4H2z" fill="#5cc5ee" />
          <path
            d="M2 8h4v3H2zM7 8h4v3H7zM12 8h4v3h-4zM2 12.500h4v3H2zM7 12.500h4v3H7zM2 17h4v3H2zM7 17h4v3H7z"
            fill="#e6e9ec"
          />
          <path d="M12 12.500h4V20h-4z" fill="#2b62a8" />
        </Icon>
      </TaskItem>
      <TaskItem $open>
        <Icon w={21} h={21} stroke="none">
          <path d="M0 0h21v21H0z" fill="#fbcb09" />
          <path d="M11 11h10L11 21z" fill="#3d3a2b" />
        </Icon>
      </TaskItem>
      <TaskItem $open>
        <Chrome
          badge={(
            <>
              <circle cx="17" cy="17" r="7" fill="#659d3b" />
              <text x="17" y="20.500" fontSize="9" fill="#fff" textAnchor="middle">S</text>
            </>
          )}
        />
      </TaskItem>
      <TaskItem $open>
        <Icon w={24} h={24} stroke="#6fb3dd">
          <circle cx="12" cy="12" r="10.500" strokeWidth="1.500" />
          <circle cx="12" cy="12" r="3.700" fill="#7cc1ec" stroke="none" />
        </Icon>
      </TaskItem>
    </>
  );
}

function WindowsTaskbar() {
  return (
    <Taskbar>
      <Cell $w={45}>
        <Icon w={16} h={16} stroke="none">
          <path
            d="M0 2.500l6.500-1v6H0zM7.500 1.300L16 0v7.500H7.500zM0 8.500h6.500v6L0 13.500zM7.500 8.500H16V16l-8.500-1.300z"
            fill="#fff"
          />
        </Icon>
      </Cell>
      <TaskSearch>
        <Icon w={16} h={16} stroke="#333" strokeWidth="1.400">
          <circle cx="10" cy="6" r="5" />
          <path d="M6.300 9.700L1 15" />
        </Icon>
        Type here to search
      </TaskSearch>
      <TaskbarIcons />
      <Tray>
        <Cell $w={22}><Icon w={12} h={8} strokeWidth="1.400"><path d="M1 7l5-5 5 5" /></Icon></Cell>
        <Cell $w={22}>
          <Icon w={12} h={16} stroke="#fff">
            <path d="M3 0h6v10H3z" fill="#fff" stroke="none" />
            <path d="M1.500 8v3.500h9V8M6 12v3M3 15h6" />
          </Icon>
        </Cell>
        <Cell $w={24}>
          <Icon w={15} h={10} stroke="#f2f2f2">
            <path d="M.5 1h12v8H.5zM13.500 3.500v3" strokeWidth="1.400" />
            <path d="M2.500 3h5v4h-5z" fill="#fff" stroke="none" />
          </Icon>
        </Cell>
        <Cell $w={22}>
          <Icon w={13} h={13}>
            <path d="M1 12C1 6 6 1 12 1M4 12c0-4 4-8 8-8M7 12c0-3 2-5 5-5M10 12c0-1 1-2 2-2" />
          </Icon>
        </Cell>
        <Cell $w={20}>
          <Icon w={16} h={12}>
            <path d="M.5 4h2.500l3-3v10l-3-3H.5zM8 4c1 1 1 3 0 4M10 2.500c2 2 2 5 0 7M12.500 1c3 3 3 7 0 10" />
          </Icon>
        </Cell>
        <Clock>
          9:38 PM
          <br />
          10/15/2020
        </Clock>
        <Cell $w={35}>
          <Icon w={16} h={16} strokeWidth="1.300"><path d="M1 1.500h14v11h-5l-2 2.500-2-2.500H1z" /></Icon>
        </Cell>
        <ShowDesktop />
      </Tray>
    </Taskbar>
  );
}

export default function App() {
  return (
    <Window>
      <GlobalStyle />
      <TitleBar />
      <Ribbon>
        <DrawPanel />
        <ModifyPanel />
        <AnnotationPanel />
        <LayersPanel />
        <BlockPanel />
        <PropertiesPanel />
        <GroupsPanel />
        <CollapsedPanels />
      </Ribbon>
      <FileTabs>
        <FileTab $w={121} $pad={15}>Start</FileTab>
        <FileTab $w={255} $pad={9} $active>
          PICTORIAL 2x2 CUBE...PECTIVE WITH DIMS*
          <Icon w={8} h={8}><path d="M.5 .5l7 7M7.500 .5l-7 7" strokeWidth="1.500" stroke="#a9b0ba" /></Icon>
        </FileTab>
        <PlusTab $w={22} $h={20} $left={2}>
          <Icon w={8} h={8}><path d="M4 0v8M0 4h8" strokeWidth="1.600" stroke="#a9b0ba" /></Icon>
        </PlusTab>
      </FileTabs>
      <CanvasArea />
      <CommandLine />
      <Status />
      <WindowsTaskbar />
    </Window>
  );
}
